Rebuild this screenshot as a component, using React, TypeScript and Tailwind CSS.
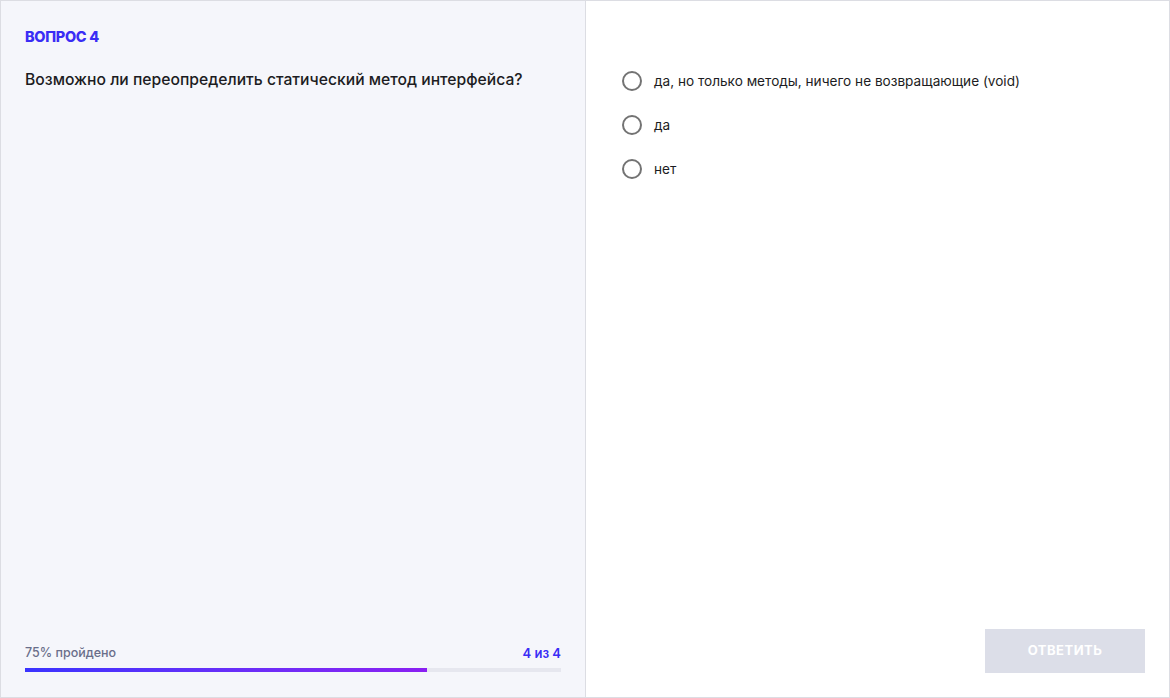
import React from "react";

const options = [
  "да, но только методы, ничего не возвращающие (void)",
  "да",
  "нет",
];

export default function App() {
  return (
    <div
      className="w-[1170px] h-[698px] flex border border-[#dcdde3] bg-white"
      style={{ fontFamily: "Inter, 'Noto Sans', sans-serif" }}
    >
      <div className="w-[585px] shrink-0 bg-[#f5f6fb] border-r border-[#dcdde3] flex flex-col px-6 pt-[28px] pb-[24px]">
        <div className="text-[14.5px] font-extrabold text-[#3a2df5] leading-4 tracking-[-0.3px]">ВОПРОС 4</div>
        <div className="mt-[25px] text-[15.7px] font-medium text-[#1c1c22] leading-5">
          Возможно ли переопределить статический метод интерфейса?
        </div>
        <div className="mt-auto">
          <div className="flex justify-between items-center leading-4">
            <span className="text-[#6a6e8a] font-medium text-[12.5px]">75% пройдено</span>
            <span className="text-[#3a2df5] font-semibold text-[13px]">4 из 4</span>
          </div>
          <div className="mt-[7px] h-[4px] bg-[#e6e7ef] w-full">
            <div className="h-full w-[75%] bg-gradient-to-r from-[#3a33ff] to-[#8a1ff2]" />
          </div>
          <div className="h-[1px]" />
        </div>
      </div>
      <div className="flex-1 flex flex-col pl-[36px] pr-6 pt-[70px] pb-6">
        <div className="flex flex-col gap-[24px]">
          {options.map((o) => (
            <label key={o} className="flex items-center gap-[12px] text-[13.6px] text-[#1c1c22] leading-5">
              <span className="w-[20px] h-[20px] rounded-full border-2 border-[#737373] shrink-0" />
              <span>{o}</span>
            </label>
          ))}
        </div>
        <div className="mt-auto flex justify-end">
          <button className="w-[160px] h-[44px] bg-[#dcdee8] text-white text-[13px] font-bold tracking-[0.5px]">
            ОТВЕТИТЬ
          </button>
        </div>
      </div>
    </div>
  );
}
